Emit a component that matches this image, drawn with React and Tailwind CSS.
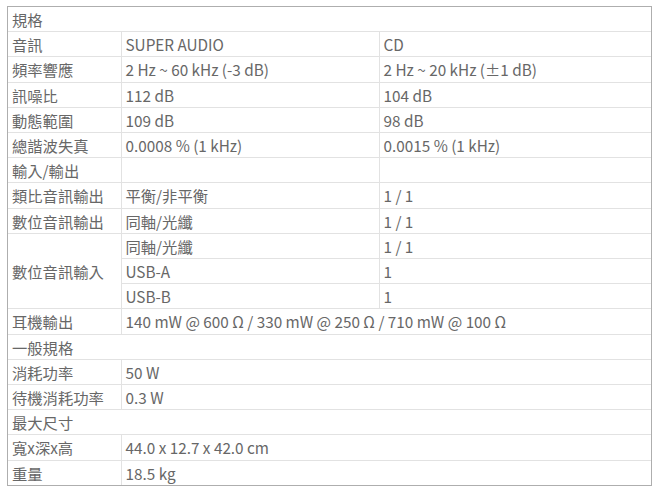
import React from "react";

const rows = [
  { type: "head", label: "規格" },
  { label: "音訊", a: "SUPER AUDIO", b: "CD" },
  { label: "頻率響應", a: "2 Hz ~ 60 kHz (-3 dB)", b: "2 Hz ~ 20 kHz (±1 dB)" },
  { label: "訊噪比", a: "112 dB", b: "104 dB" },
  { label: "動態範圍", a: "109 dB", b: "98 dB" },
  { label: "總諧波失真", a: "0.0008 % (1 kHz)", b: "0.0015 % (1 kHz)" },
  { label: "輸入/輸出", a: "", b: "" },
  { label: "類比音訊輸出", a: "平衡/非平衡", b: "1 / 1" },
  { label: "數位音訊輸出", a: "同軸/光纖", b: "1 / 1" },
  { label: "數位音訊輸入", a: "同軸/光纖", b: "1 / 1", span: 3 },
  { skip: true, a: "USB-A", b: "1" },
  { skip: true, a: "USB-B", b: "1" },
  { label: "耳機輸出", wide: "140 mW @ 600 Ω / 330 mW @ 250 Ω / 710 mW @ 100 Ω" },
  { type: "head", label: "一般規格" },
  { label: "消耗功率", wide: "50 W" },
  { label: "待機消耗功率", wide: "0.3 W" },
  { type: "head", label: "最大尺寸" },
  { label: "寬x深x高", wide: "44.0 x 12.7 x 42.0 cm" },
  { label: "重量", wide: "18.5 kg" },
];

const cell = "border border-[#e2e2e2] px-1 py-[2px] leading-[20.2px] whitespace-nowrap";

export default function App() {
  return (
    <div className="bg-white min-h-screen pt-[6px] pl-[7px]">
      <div className="w-[645px] border border-[#aeaeae] text-[15.3px] text-[#676767] font-['Noto_Sans_CJK_TC','Noto_Sans',sans-serif]">
        <table className="w-full table-fixed border-collapse border-hidden">
          <colgroup>
            <col className="w-[113px]" />
            <col className="w-[258px]" />
            <col />
          </colgroup>
          <tbody>
            {rows.map((r, i) => {
              if (r.type === "head") {
                return (
                  <tr key={i}>
                    <td className={cell} colSpan={3}>
                      {r.label}
                    </td>
                  </tr>
                );
              }
              return (
                <tr key={i}>
                  {!r.skip && (
                    <td className={cell} rowSpan={r.span || 1}>
                      {r.label}
                    </td>
                  )}
                  {r.wide !== undefined ? (
                    <td className={cell} colSpan={2}>
                      {r.wide}
                    </td>
                  ) : (
                    <>
                      <td className={cell}>{r.a}</td>
                      <td className={cell}>{r.b}</td>
                    </>
                  )}
                </tr>
              );
            })}
          </tbody>
        </table>
      </div>
    </div>
  );
}
